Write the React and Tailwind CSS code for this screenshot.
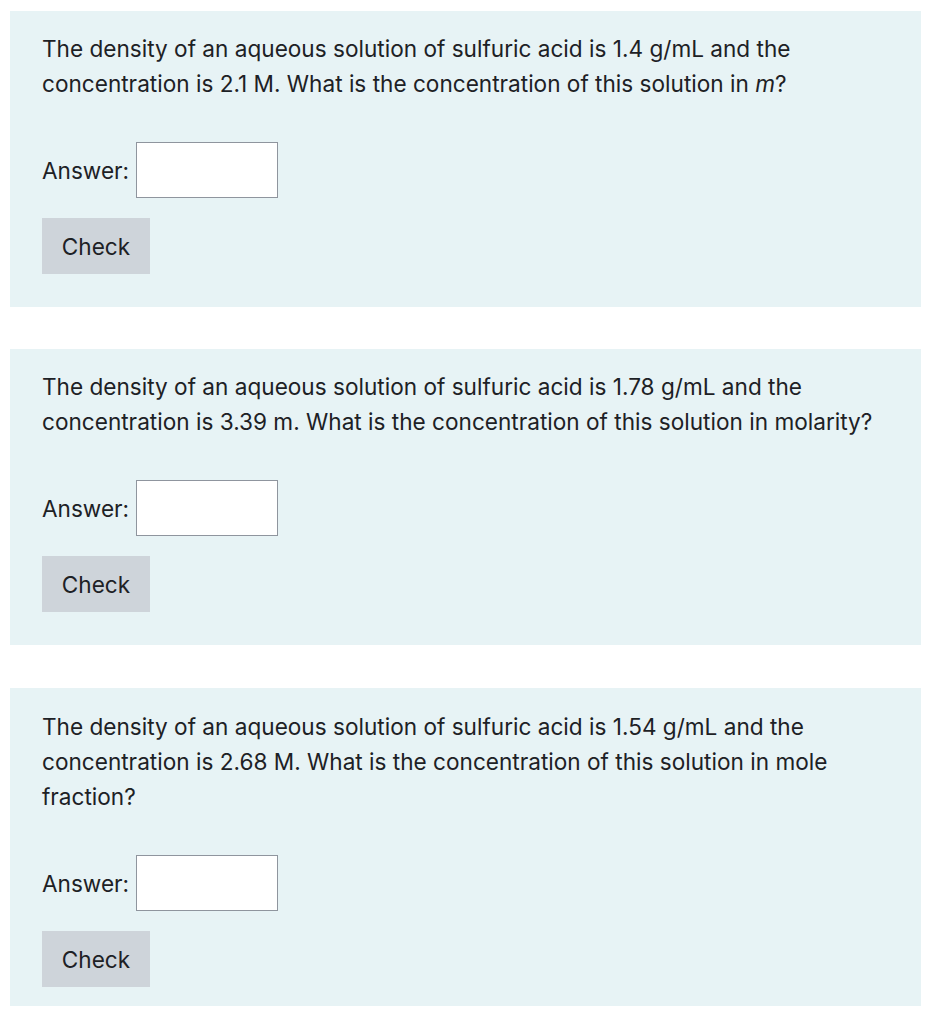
import { useState } from 'react';

const questions = [
    {
        id: 1,
        text: <>The density of an aqueous solution of sulfuric acid is 1.4 g/mL and the concentration is 2.1 M. What is the concentration of this solution in <em>m</em>?</>,
        box: 'pt-[20px] pb-[33px]',
    },
    {
        id: 2,
        text: <>The density of an aqueous solution of sulfuric acid is 1.78 g/mL and the concentration is 3.39 m. What is the concentration of this solution in molarity?</>,
        box: 'mt-[42px] pt-[20px] pb-[33px]',
    },
    {
        id: 3,
        text: <>The density of an aqueous solution of sulfuric acid is 1.54 g/mL and the concentration is 2.68 M. What is the concentration of this solution in mole fraction?</>,
        box: 'mt-[43px] pt-[21px] pb-[19px]',
    },
];

const Question = ({ item }) => {
    const [ answer, setAnswer ] = useState('');

    return (
        <section className={ `bg-[#e7f3f5] pl-[32px] pr-[30px] ${ item.box }` }>
            <p className="text-[22.6px] leading-[35px] text-[#1d2125]">{ item.text }</p>
            <div className="flex items-center mt-[41px]">
                <label className="text-[22.6px] text-[#1d2125] pt-[1px]">Answer:</label>
                <input
                    value={ answer }
                    onChange={ (e) => setAnswer(e.target.value) }
                    className="ml-[7px] w-[142px] h-[56px] bg-white border border-[#8f959e] outline-none px-2 text-[20px]"
                />
            </div>
            <button className="mt-[20px] w-[108px] h-[56px] pt-[1px] bg-[#ced4da] text-[22.6px] text-[#1d2125]">Check</button>
        </section>
    );
}

const App = () => {
    return (
        <div className="bg-white min-h-screen px-[10px] pt-[11px] flex flex-col w-[931px]" style={{ fontFamily: 'Inter, "Noto Sans", sans-serif' }}>
            { questions.map((item) => <Question key={ item.id } item={ item } />) }
        </div>
    );
}

export default App;
